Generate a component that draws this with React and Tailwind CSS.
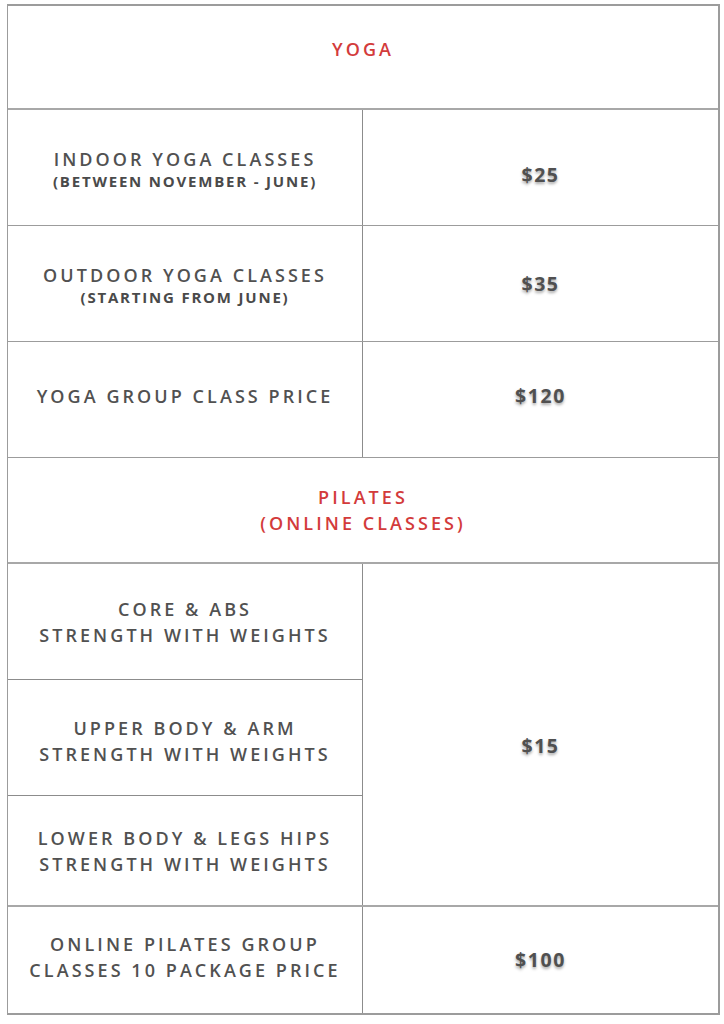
import React from "react";

const cell = "flex items-center justify-center text-center";
const label = "text-[18px] leading-[26px] tracking-[0.17em] text-[#515151] font-semibold";
const sub = "text-[15px] leading-[18px] tracking-[0.12em] font-bold text-[#4a4a4a]";
const price =
  "text-[19.5px] font-bold tracking-[0.08em] text-[#505050] [text-shadow:0_2px_3px_rgba(0,0,0,0.35)]";
const heading = "text-[18px] leading-[26px] tracking-[0.17em] text-[#d33b3b] font-semibold";

const Row = ({ children, value, h = "h-[116px]", off = "" }) => (
  <div className={`grid grid-cols-[355px_1fr] border-b border-[#9c9c9c] ${h}`}>
    <div className={`${cell} border-r border-[#8c8c8c]`}>{children}</div>
    <div className={`${cell} ${off}`}>
      <span className={price}>{value}</span>
    </div>
  </div>
);

const App = () => {
  return (
    <div className="min-h-[1024px] bg-white pt-[4px] pl-[7px] font-['Open_Sans','Lato',sans-serif]">
      <div className="w-[713px] border-2 border-b border-[#9c9c9c] border-l-[1.5px]">
        <div className={`${cell} h-[104px] pb-[16px] border-b-2 border-[#a8a8a8]`}>
          <span className={heading}>YOGA</span>
        </div>
        <Row value="$25" off="pt-[14px]">
          <div>
            <div className={label}>INDOOR YOGA CLASSES</div>
            <div className={sub}>(BETWEEN NOVEMBER - JUNE)</div>
          </div>
        </Row>
        <Row value="$35">
          <div>
            <div className={label}>OUTDOOR YOGA CLASSES</div>
            <div className={sub}>(STARTING FROM JUNE)</div>
          </div>
        </Row>
        <Row value="$120" off="pb-[8px]">
          <div className={`${label} pb-[8px]`}>YOGA GROUP CLASS PRICE</div>
        </Row>
        <div className={`${cell} h-[106px] border-b-2 border-[#a8a8a8]`}>
          <div className={heading}>
            <div>PILATES</div>
            <div>(ONLINE CLASSES)</div>
          </div>
        </div>
        <div className="grid grid-cols-[355px_1fr] border-b-2 border-[#a8a8a8]">
          <div className="flex flex-col border-r border-[#8c8c8c]">
            <div className={`${cell} h-[116px] border-b border-[#8c8c8c]`}>
              <div className={label}>
                <div>CORE &amp; ABS</div>
                <div>STRENGTH WITH WEIGHTS</div>
              </div>
            </div>
            <div className={`${cell} h-[116px] pt-[6px] border-b border-[#8c8c8c]`}>
              <div className={label}>
                <div>UPPER BODY &amp; ARM</div>
                <div>STRENGTH WITH WEIGHTS</div>
              </div>
            </div>
            <div className={`${cell} h-[109px]`}>
              <div className={label}>
                <div>LOWER BODY &amp; LEGS HIPS</div>
                <div>STRENGTH WITH WEIGHTS</div>
              </div>
            </div>
          </div>
          <div className={`${cell} pt-[22px]`}>
            <span className={price}>$15</span>
          </div>
        </div>
        <Row value="$100" h="h-[107px]">
          <div className={`${label} pb-[6px]`}>
            <div>ONLINE PILATES GROUP</div>
            <div>CLASSES 10 PACKAGE PRICE</div>
          </div>
        </Row>
      </div>
    </div>
  );
};

export default App;
